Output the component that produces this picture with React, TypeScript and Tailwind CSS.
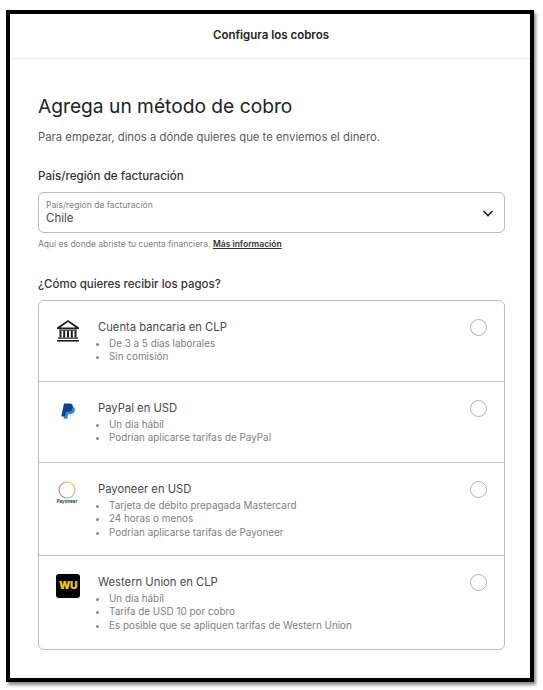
const font = "font-['Inter','Noto_Sans',sans-serif]";

const BankIcon = () => (
  <svg width="24" height="24" viewBox="0 0 24 24" fill="#222">
    <path d="M12 1 L23 8.5 V10 H1 V8.5 Z M12 3 L4.5 8.5 H19.5 Z" fillRule="evenodd" />
    <rect x="3" y="10.5" width="18" height="1.2" />
    <rect x="3.5" y="11.5" width="2" height="7" />
    <rect x="7.2" y="11.5" width="2" height="7" />
    <rect x="11" y="11.5" width="2" height="7" />
    <rect x="14.8" y="11.5" width="2" height="7" />
    <rect x="18.5" y="11.5" width="2" height="7" />
    <rect x="2" y="18.5" width="20" height="1.2" />
    <rect x="1" y="21" width="22" height="1.6" />
  </svg>
);

const PayPalIcon = () => (
  <svg width="14" height="17" viewBox="0 0 14 17">
    <path d="M5 3.5 H10 C13 3.5 14.5 5 13.8 7.8 C13.2 10.2 11.5 11.2 9 11.2 H7.2 L6.4 15.8 H2.6 Z" fill="#2c8fd6" />
    <path d="M3 0.5 H8.2 C11 0.5 12.3 1.9 11.8 4.4 C11.2 7.6 9.2 8.8 6.6 8.8 H4.9 L4 13.6 H0.3 Z" fill="#123f85" />
  </svg>
);

const PayoneerIcon = () => (
  <div className="flex w-[22px] flex-col items-center">
    <svg width="18" height="18" viewBox="0 0 18 18" fill="none" strokeWidth="1.2">
      <path d="M9 1 A8 8 0 0 1 17 9" stroke="#f2c14e" />
      <path d="M17 9 A8 8 0 0 1 9 17" stroke="#a5d26a" />
      <path d="M9 17 A8 8 0 0 1 1 9" stroke="#6fa8dc" />
      <path d="M1 9 A8 8 0 0 1 9 1" stroke="#ee7b6d" />
    </svg>
    <span className="text-[4.5px] leading-[6px] font-semibold text-[#222]">Payoneer</span>
  </div>
);

const WuIcon = () => (
  <div className="flex h-[24px] w-[24px] items-center justify-center rounded-[3px] bg-black">
    <span className="text-[10.5px] font-black leading-none tracking-[-0.5px] text-[#f5c518]">WU</span>
  </div>
);

const methods = [
  { title: "Cuenta bancaria en CLP", items: ["De 3 a 5 días laborales", "Sin comisión"], Icon: BankIcon, height: "h-[81px]", iconClass: "pt-[18px] pl-[17px]" },
  { title: "PayPal en USD", items: ["Un día hábil", "Podrían aplicarse tarifas de PayPal"], Icon: PayPalIcon, height: "h-[81px]", iconClass: "pt-[21px] pl-[22px]" },
  { title: "Payoneer en USD", items: ["Tarjeta de débito prepagada Mastercard", "24 horas o menos", "Podrían aplicarse tarifas de Payoneer"], Icon: PayoneerIcon, height: "h-[93px]", iconClass: "pt-[18px] pl-[17px]" },
  { title: "Western Union en CLP", items: ["Un día hábil", "Tarifa de USD 10 por cobro", "Es posible que se apliquen tarifas de Western Union"], Icon: WuIcon, height: "h-[93px]", iconClass: "pt-[18px] pl-[17px]" },
];

export default function App() {
  return (
    <div className={`h-[690px] w-[543px] overflow-hidden bg-white pl-[6px] pt-[10px] ${font}`}>
      <div className="h-[672px] w-[528px] border-x-[4px] border-y-[4px] border-black bg-white shadow-[2px_3px_3px_rgba(0,0,0,0.45)]">
        <header className="flex h-[45px] items-center justify-center border-b border-[#ebebeb] pl-[2px]">
          <h1 className="text-[11.5px] font-semibold text-[#222]">Configura los cobros</h1>
        </header>

        <main className="px-[28px] pt-[35px]">
          <h2 className="text-[19.2px] font-normal leading-[24px] text-[#222]">Agrega un método de cobro</h2>
          <p className="mt-[11px] text-[11.3px] leading-[16px] text-[#5a5a5a]">
            Para empezar, dinos a dónde quieres que te enviemos el dinero.
          </p>

          <h3 className="mt-[23px] text-[11.6px] font-medium leading-[16px] text-[#333]">País/región de facturación</h3>
          <div className="relative mt-[8px] flex h-[41px] w-[467px] flex-col justify-center rounded-[6px] border border-[#bbb] pl-[7px]">
            <span className="text-[8.6px] leading-[11px] text-[#808080]">País/región de facturación</span>
            <span className="text-[11.5px] leading-[15px] text-[#484848]">Chile</span>
            <svg className="absolute right-[10px] top-[16px]" width="12" height="9" viewBox="0 0 12 9" fill="none" stroke="#222" strokeWidth="1.6">
              <path d="M1.5 2 L6 6.5 L10.5 2" />
            </svg>
          </div>
          <p className="mt-[5px] text-[8.5px] leading-[12px] text-[#808080]">
            Aquí es donde abriste tu cuenta financiera.{" "}
            <span className="font-semibold text-[#333] underline">Más información</span>
          </p>

          <h3 className="mt-[26px] text-[11.5px] font-medium leading-[16px] text-[#333]">¿Cómo quieres recibir los pagos?</h3>
          <div className="mt-[8px] w-[467px] divide-y divide-[#c4c4c4] rounded-[6px] border border-[#bbb]">
            {methods.map((m) => (
              <div key={m.title} className={`flex ${m.height}`}>
                <div className={`w-[59px] shrink-0 ${m.iconClass}`}>
                  <m.Icon />
                </div>
                <div className="flex-1 pt-[18px]">
                  <div className="text-[11.25px] leading-[16px] text-[#484848]">{m.title}</div>
                  <ul className="mt-[2px] list-disc pl-[11px] text-[9.9px] leading-[13.3px] text-[#808080] marker:text-[#888]">
                    {m.items.map((item) => (
                      <li key={item}>{item}</li>
                    ))}
                  </ul>
                </div>
                <div className="pr-[17px] pt-[18px]">
                  <div className="h-[17px] w-[17px] rounded-full border border-[#b0b0b0]" />
                </div>
              </div>
            ))}
          </div>
        </main>
      </div>
    </div>
  );
}
